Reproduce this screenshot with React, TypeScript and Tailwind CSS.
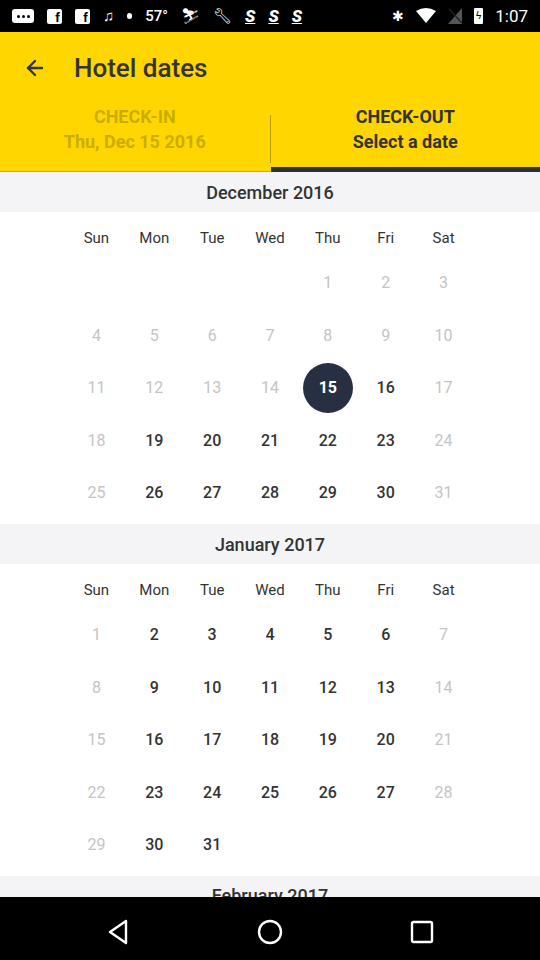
import { ArrowLeft } from "lucide-react";

type Month = {
    title: string;
    offset: number;
    days: number;
    muted: (d: number, col: number) => boolean;
    selected?: number;
};

const dayNames = ["Sun", "Mon", "Tue", "Wed", "Thu", "Fri", "Sat"];

const months: Month[] = [
    {
        title: "December 2016",
        offset: 4,
        days: 31,
        muted: (d, col) => d < 15 || col === 0 || col === 6,
        selected: 15,
    },
    {
        title: "January 2017",
        offset: 0,
        days: 31,
        muted: (_d, col) => col === 0 || col === 6,
    },
];

function StatusBar() {
    return (
        <div className="flex h-8 items-center justify-between bg-black px-3 text-white">
            <div className="flex items-center gap-[13px]">
                <div className="flex h-[14px] w-[22px] items-center justify-center rounded-[3px] bg-white">
                    <span className="flex gap-[2px]">
                        <span className="h-[3px] w-[3px] rounded-full bg-black" />
                        <span className="h-[3px] w-[3px] rounded-full bg-black" />
                        <span className="h-[3px] w-[3px] rounded-full bg-black" />
                    </span>
                </div>
                <div className="flex h-[15px] w-[15px] items-end justify-end rounded-[2px] bg-white pr-[2px] text-[13px] font-bold leading-none text-black">f</div>
                <div className="flex h-[15px] w-[15px] items-end justify-end rounded-[2px] bg-white pr-[2px] text-[13px] font-bold leading-none text-black">f</div>
                <span className="text-[15px] leading-none">♫</span>
                <span className="h-[6px] w-[5px] rounded-full bg-white" />
                <span className="text-[15px] font-medium leading-none">57°</span>
                <span className="text-[15px] leading-none">⛷</span>
                <span className="text-[15px] leading-none">🔧︎</span>
                <span className="text-[17px] font-black italic leading-none underline">S</span>
                <span className="text-[17px] font-black italic leading-none underline">S</span>
                <span className="text-[17px] font-black italic leading-none underline">S</span>
            </div>
            <div className="flex items-center gap-[12px]">
                <span className="text-[14px] leading-none">✱</span>
                <svg width="20" height="16" viewBox="0 0 20 16">
                    <path d="M0 3 Q10 -3 20 3 L10 15 Z" fill="white" />
                </svg>
                <svg width="14" height="16" viewBox="0 0 14 16">
                    <path d="M14 0 L14 16 L0 16 Z" fill="#555" />
                    <path d="M1 1 L14 15" stroke="#222" strokeWidth="1.5" />
                </svg>
                <div className="flex h-[16px] w-[9px] items-center justify-center rounded-[1px] bg-white text-[10px] leading-none text-black">ϟ</div>
                <span className="text-[17px] leading-none">1:07</span>
            </div>
        </div>
    );
}

function Header() {
    return (
        <div className="bg-[#ffd600]">
            <div className="flex h-[72px] items-center">
                <ArrowLeft className="ml-[23px] h-6 w-6 text-[#333]" strokeWidth={2.4} />
                <h1 className="ml-[27px] text-[26px] font-medium text-[#333]">Hotel dates</h1>
            </div>
            <div className="flex h-[68px]">
                <div className="flex flex-1 flex-col border-b border-[#c9ae00]">
                    <div className="text-center text-[18px] font-bold leading-[25px] text-[#cbad00]">
                        <div>CHECK-IN</div>
                        <div>Thu, Dec 15 2016</div>
                    </div>
                </div>
                <div className="mt-[11px] h-[48px] w-px bg-[#b59b00]" />
                <div className="flex flex-1 flex-col">
                    <div className="text-center text-[18px] font-bold leading-[25px] text-[#333]">
                        <div>CHECK-OUT</div>
                        <div>Select a date</div>
                    </div>
                    <div className="mt-auto h-[5px] bg-[#2d2f36]" />
                </div>
            </div>
        </div>
    );
}

function MonthTitle({ title }: { title: string }) {
    return (
        <div className="flex h-10 items-center justify-center bg-[#f4f4f6] text-[18px] font-medium text-[#333]">
            {title}
        </div>
    );
}

function MonthBlock({ month }: { month: Month }) {
    const cells: (number | null)[] = [];
    for (let i = 0; i < month.offset; i++) cells.push(null);
    for (let d = 1; d <= month.days; d++) cells.push(d);

    return (
        <section>
            <MonthTitle title={month.title} />
            <div className="mx-auto w-[405px] pb-[4.5px] pt-[7px]">
                <div className="grid h-[38px] grid-cols-7 items-center text-center text-[15px] text-[#333]">
                    {dayNames.map((name) => (
                        <div key={name}>{name}</div>
                    ))}
                </div>
                <div className="grid grid-cols-7">
                    {cells.map((d, i) => {
                        const col = i % 7;
                        if (d === null) return <div key={`e${i}`} className="h-[52.5px]" />;
                        if (d === month.selected) {
                            return (
                                <div key={d} className="flex h-[52.5px] items-center justify-center">
                                    <span className="flex h-[50px] w-[50px] items-center justify-center rounded-full bg-[#273043] text-[16px] font-bold text-white">
                                        {d}
                                    </span>
                                </div>
                            );
                        }
                        const muted = month.muted(d, col);
                        return (
                            <div
                                key={d}
                                className={
                                    muted
                                        ? "flex h-[52.5px] items-center justify-center text-[16px] text-[#c4c4c4]"
                                        : "flex h-[52.5px] items-center justify-center text-[16px] font-medium text-[#333]"
                                }
                            >
                                {d}
                            </div>
                        );
                    })}
                </div>
            </div>
        </section>
    );
}

function NavBar() {
    return (
        <div className="flex h-[63px] items-center bg-black pl-[42px] pt-[6px]">
            <div className="flex w-[152px] justify-center">
                <svg width="22" height="26" viewBox="0 0 22 26">
                    <path d="M19 2 L3 13 L19 24 Z" fill="none" stroke="white" strokeWidth="2.4" strokeLinejoin="round" />
                </svg>
            </div>
            <div className="flex w-[152px] justify-center">
                <svg width="26" height="26" viewBox="0 0 26 26">
                    <circle cx="13" cy="13" r="11" fill="none" stroke="white" strokeWidth="2.4" />
                </svg>
            </div>
            <div className="flex w-[152px] justify-center">
                <svg width="24" height="24" viewBox="0 0 24 24">
                    <rect x="2" y="2" width="20" height="20" rx="1.5" fill="none" stroke="white" strokeWidth="2.4" />
                </svg>
            </div>
        </div>
    );
}

export default function App() {
    return (
        <div className="flex h-[960px] w-[540px] flex-col overflow-hidden bg-white font-['Roboto',sans-serif]">
            <StatusBar />
            <Header />
            <div className="flex-1 overflow-hidden">
                {months.map((m) => (
                    <MonthBlock key={m.title} month={m} />
                ))}
                <div className="flex h-10 items-start justify-center bg-[#f4f4f6] pt-[8px] text-[18px] font-medium leading-[24px] text-[#333]">
                    February 2017
                </div>
            </div>
            <NavBar />
        </div>
    );
}
